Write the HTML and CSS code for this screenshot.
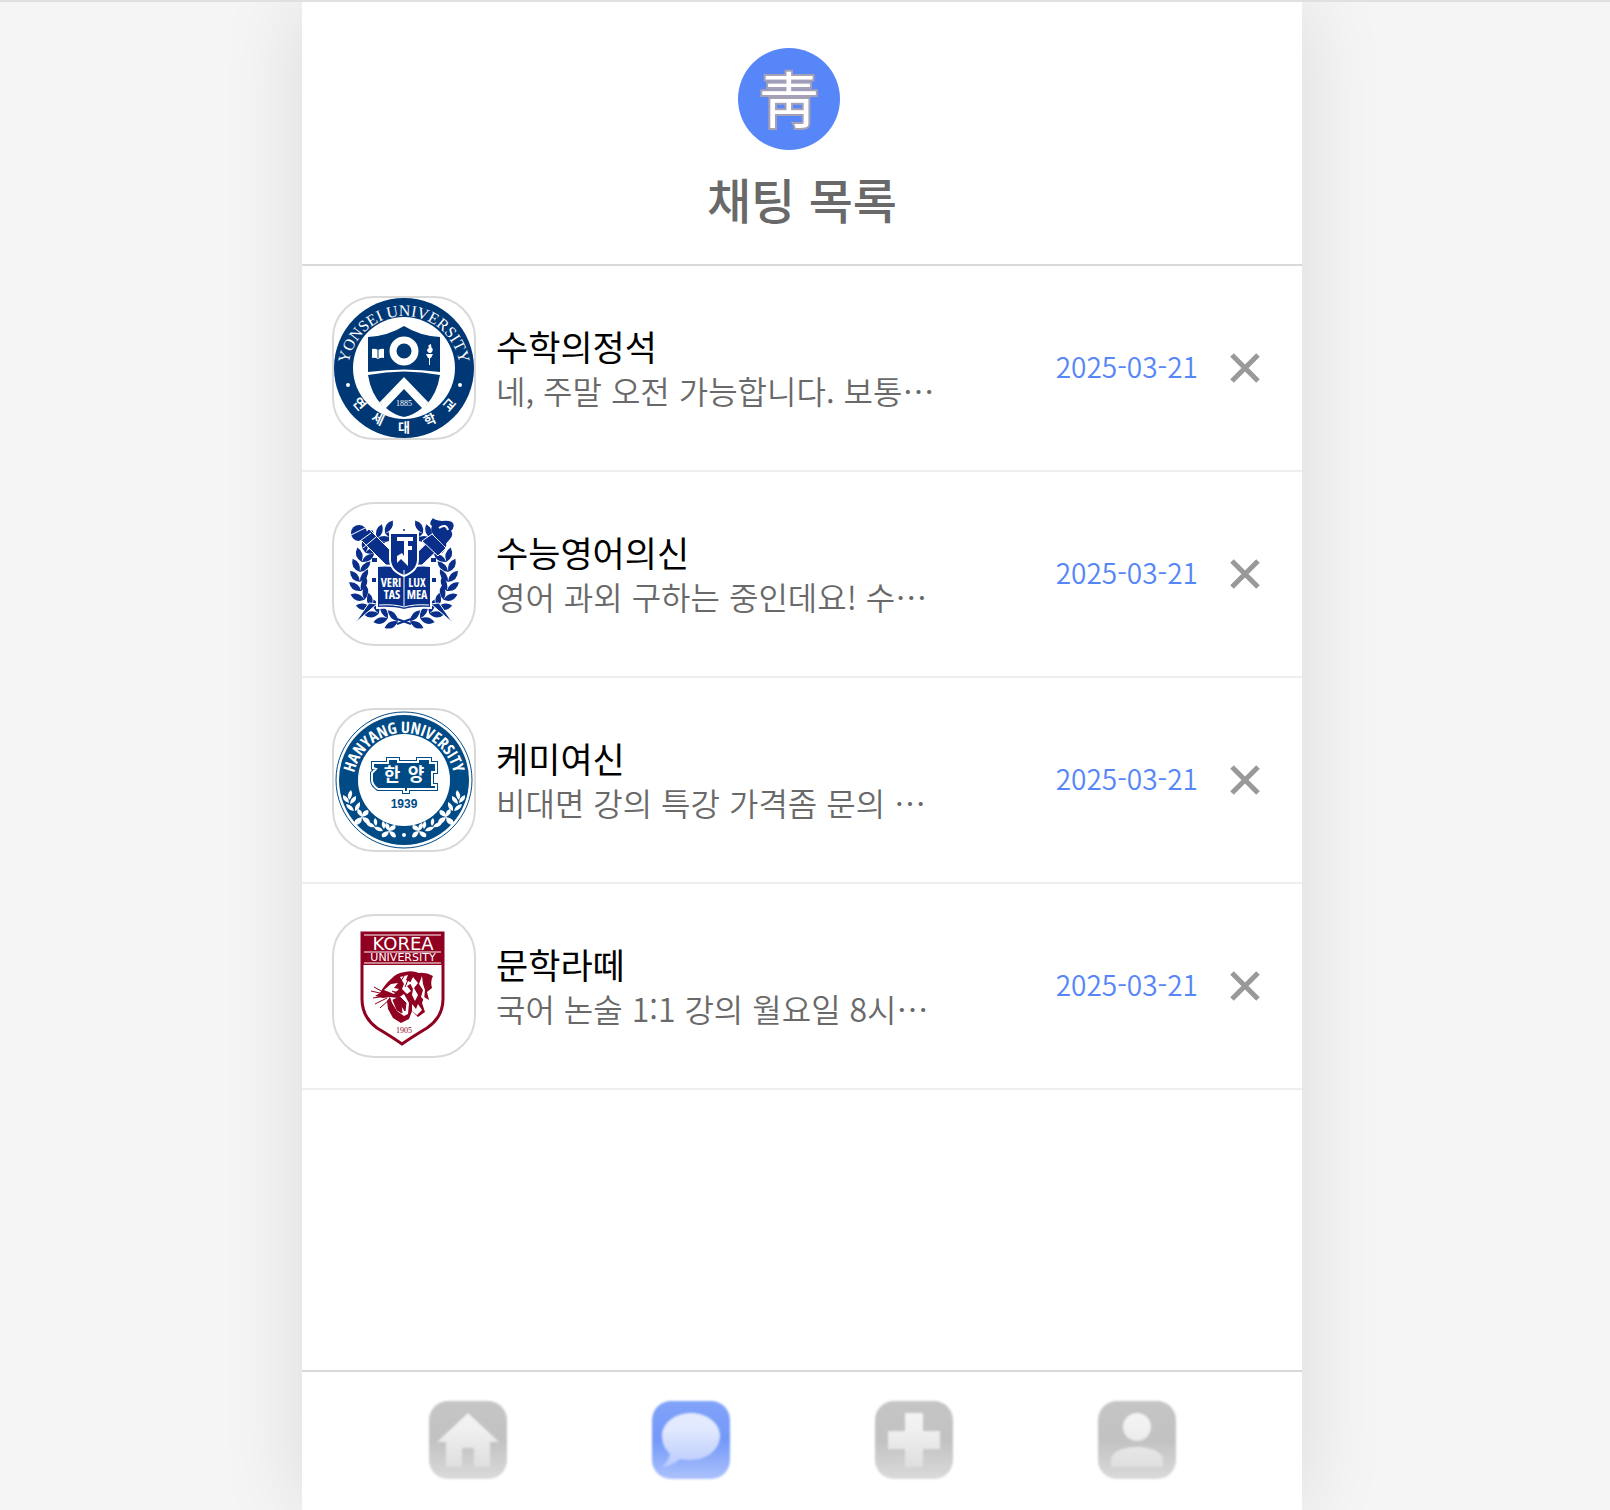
FILE: index.html
```html
<!DOCTYPE html>
<html lang="ko">
<head>
<meta charset="utf-8">
<meta name="viewport" content="width=device-width, initial-scale=1">
<title>채팅 목록</title>
<link rel="stylesheet" href="styles.css">
</head>
<body>
<div class="app">
  <header class="header">
    <a class="logo" href="#" aria-label="홈으로"><span class="logo-mark">靑</span></a>
    <h1 class="title">채팅 목록</h1>
  </header>

  <main class="main">
    <ul class="chats">
      <li class="chat">
        <svg class="thumb" viewBox="0 0 140 140" role="img" aria-label="연세대학교">
          <defs>
            <path id="yCirc" d="M14 74A56 56 0 1 1 126 74"/>
          </defs>
          <circle cx="70" cy="70" r="70" fill="#003876"/>
          <circle cx="70" cy="70" r="51" fill="#fff"/>
          <text class="seal-serif" font-size="16" fill="#fff" text-anchor="middle"><textPath href="#yCirc" startOffset="50%">YONSEI UNIVERSITY</textPath></text>
          <g class="seal-ko" font-size="13" fill="#fff" text-anchor="middle">
            <text transform="translate(22 109) rotate(49)">연</text>
            <text transform="translate(42 125) rotate(25)">세</text>
            <text x="70" y="134">대</text>
            <text transform="translate(98 126) rotate(-25)">학</text>
            <text transform="translate(119 110) rotate(-49)">교</text>
          </g>
          <circle cx="14" cy="87" r="2" fill="#fff"/><circle cx="126" cy="87" r="2" fill="#fff"/>
          <path d="M34 39q20-1 36-11 16 10 36 11v35q-36-5-72 0z" fill="#003876"/>
          <path d="M34 77q36-7 72 0-3 19-14 30L70 84l-22 23Q37 96 34 77z" fill="#003876"/>
          <path d="M48 107l22-23 22 23" fill="none" stroke="#fff" stroke-width="7"/>
          <path d="M52 110l18-19 18 19q-8 7-18 9-10-2-18-9z" fill="#003876"/>
          <circle cx="70" cy="53" r="11" fill="none" stroke="#fff" stroke-width="7"/>
          <path d="M38 51q3-1 6 1 4-2 6-1v9q-3-1-6 1-3-2-6-1z" fill="#fff"/><path d="M44 52v8" stroke="#003876"/>
          <path d="M92 56h7l-2 4h-1v7h-1v-7h-1zM95 55q-4-3 0-5-2-3 2-4 0 3 1 4 2 2-1 5z" fill="#fff"/>
          <text class="seal-serif" x="70" y="108" font-size="8" text-anchor="middle" fill="#fff">1885</text>
        </svg>
        <a class="chat-text" href="#"><strong class="name">수학의정석</strong><span class="message">네, 주말 오전 가능합니다. 보통…</span></a>
        <time class="date" datetime="2025-03-21">2025-03-21</time>
        <button class="remove" type="button" aria-label="수학의정석 채팅 삭제"><svg viewBox="0 0 30 30"><path d="M2 2l26 26M28 2L2 28"/></svg></button>
      </li>

      <li class="chat">
        <svg class="thumb" viewBox="0 0 140 140" role="img" aria-label="서울대학교">
          <defs>
            <g id="leaf"><path d="M0 1q-10-2-9-12 9 2 9 12zM0 1q0-9 9-12 1 9-9 12z"/></g>
            <g id="branch">
              <use href="#leaf" transform="translate(63 117) rotate(-80)"/>
              <use href="#leaf" transform="translate(53 114) rotate(-68)"/>
              <use href="#leaf" transform="translate(44 109) rotate(-58)"/>
              <use href="#leaf" transform="translate(36 103) rotate(-45)"/>
              <use href="#leaf" transform="translate(30 95) rotate(-32)"/>
              <use href="#leaf" transform="translate(27 86) rotate(-18)"/>
              <use href="#leaf" transform="translate(26 77) rotate(-5)"/>
              <use href="#leaf" transform="translate(26 67) rotate(8)"/>
              <use href="#leaf" transform="translate(28 57) rotate(20)"/>
              <use href="#leaf" transform="translate(32 48) rotate(34)"/>
              <use href="#leaf" transform="translate(37 40) rotate(44)"/>
              <use href="#leaf" transform="translate(44 34) rotate(55)"/>
              <use href="#leaf" transform="translate(52 29) rotate(68)"/>
            </g>
          </defs>
          <g fill="#0a2f8a">
            <use href="#branch"/><use href="#branch" transform="translate(140 0) scale(-1 1)"/>
            <path d="M63 115l14 5M77 115l-14 5" stroke="#0a2f8a" stroke-width="2"/>
            <circle cx="70" cy="26" r="1"/>
            <path d="M25 34l10-9 44 44-10 9zM97 100l8-1 14 20zM43 100l-8-1-14 20z" stroke="#fff" stroke-width="1"/>
            <circle cx="25" cy="29" r="8"/>
            <path d="M17 31l16-8M23 39l14-10M29 44l13-11" stroke="#fff" stroke-width="1"/>
            <path d="M100 32l9 9-43 41-8-9z" stroke="#fff"/>
            <path d="M88 37l10-7 14 14-8 8z" stroke="#fff"/>
            <path d="M99 30l11 12 6-7q4-5 1-8 5-5 1-9-4-2-10-1-8-1-9-3-5 6-1 8-2 4 1 8z"/>
            <path d="M105 24q7-5 9 2" fill="none" stroke="#fff" stroke-width="2"/>
            <path d="M38 54h5v4h-5zM97 54h5v4h-5zM38 74h5v4h-5zM97 74h5v4h-5z"/>
            <path d="M43 62q15-2 27 3 12-5 27-3v42q-16-1-27 2-11-3-27-2z" stroke="#fff" stroke-width="2"/>
            <path d="M56 29h28v26q0 12-14 17-14-5-14-17z" stroke="#fff" stroke-width="2"/>
          </g>
          <path d="M63 33h16v4h-5v5h4v4h-4v16l-7-7-4 4V52l5-3 2 3V37h-7z" fill="#fff"/>
          <path d="M70 66v36M45 101q15-1 25 2 10-3 25-2" fill="none" stroke="#fff"/>
          <g class="seal-cond" font-size="12" fill="#fff" text-anchor="middle">
            <text x="57" y="83">VERI</text><text x="58" y="95">TAS</text>
            <text x="83" y="83">LUX</text><text x="83" y="95">MEA</text>
          </g>
        </svg>
        <a class="chat-text" href="#"><strong class="name">수능영어의신</strong><span class="message">영어 과외 구하는 중인데요! 수…</span></a>
        <time class="date" datetime="2025-03-21">2025-03-21</time>
        <button class="remove" type="button" aria-label="수능영어의신 채팅 삭제"><svg viewBox="0 0 30 30"><path d="M2 2l26 26M28 2L2 28"/></svg></button>
      </li>

      <li class="chat">
        <svg class="thumb" viewBox="0 0 140 140" role="img" aria-label="한양대학교">
          <defs>
            <path id="hArc" d="M19 74a51 51 0 1 1 102 0"/>
            <g id="sprig" fill="#fff">
              <path d="M15 90q-3-6 2-10 3 5-2 10zM15 93q-7-2-6-8 6 2 6 8zM16 94q0-6 6-8 1 6-6 8zM20 101q-7-1-8-7 7 1 8 7zM21 101q-1-6 5-9 1 7-5 9z"/>
              <path d="M28 107q-7-4-4-8 5 1 4 8 0-7 6-7 3 5-6 7 8 0 8 6-6 2-8-6 0 8-7 8-3-6 7-8z"/>
              <path d="M41 117q-7 1-9-4 6-2 9 4zM42 116q-4-4-1-8 4 3 1 8zM49 121q-7 1-9-4 7-1 9 4zM50 119q-4-4-1-8 4 3 1 8z"/>
              <path d="M55 121q-6-4-3-8 5 1 3 8 0-6 6-6 3 5-6 6 7 0 7 6-5 2-7-6-1 7-7 6-2-5 7-6z"/>
            </g>
          </defs>
          <circle cx="70" cy="70" r="68" fill="#fff" stroke="#004a86"/>
          <circle cx="70" cy="70" r="65" fill="#004a86"/>
          <circle cx="70" cy="70" r="46" fill="#fff"/>
          <text class="seal-cond" font-size="16" fill="#fff" text-anchor="middle"><textPath href="#hArc" startOffset="50%">HANYANG UNIVERSITY</textPath></text>
          <use href="#sprig"/><use href="#sprig" transform="translate(140 0) scale(-1 1)"/>
          <circle cx="70" cy="125" r="2" fill="#fff"/>
          <path d="M39 53h15v-4h10v3h20v-3h12v4h6v9h-4v13h4v4H74v3h-4v-3H44q-6-4-6-9v-7l4-4-3-1z" fill="#004a86" stroke="#004a86" stroke-width="4"/>
          <path d="M39 53h15v-4h10v3h20v-3h12v4h6v9h-4v13h4v4H74v3h-4v-3H44q-6-4-6-9v-7l4-4-3-1z" fill="#004a86" stroke="#fff" stroke-width="2"/>
          <g class="seal-ko" font-size="18" fill="#fff" text-anchor="middle"><text x="58" y="71">한</text><text x="82" y="71">양</text></g>
          <text class="seal-wide" x="70" y="98" font-size="12" fill="#004a86" text-anchor="middle">1939</text>
        </svg>
        <a class="chat-text" href="#"><strong class="name">케미여신</strong><span class="message">비대면 강의 특강 가격좀 문의 …</span></a>
        <time class="date" datetime="2025-03-21">2025-03-21</time>
        <button class="remove" type="button" aria-label="케미여신 채팅 삭제"><svg viewBox="0 0 30 30"><path d="M2 2l26 26M28 2L2 28"/></svg></button>
      </li>

      <li class="chat">
        <svg class="thumb" viewBox="0 0 140 140" role="img" aria-label="고려대학교">
          <path d="M28 17h81v66q0 18-16 29-15 9-25 16-10-7-25-16-15-11-15-29z" fill="#fff" stroke="#900020" stroke-width="3"/>
          <path d="M27 16h83v33H27z" fill="#900020"/>
          <path d="M30 19h77M30 36h77M30 47h77" stroke="#fff"/>
          <g class="seal-sans" fill="#fff" text-anchor="middle">
            <text x="69" y="34" font-size="18">KOREA</text>
            <text x="69" y="45" font-size="11">UNIVERSITY</text>
          </g>
          <path d="M46 77q5-9 11-14 5-6 14-7 7-2 14 1 7-1 14 3-3 5-1 12l-5 4 2 8-5-3-2 6 3 9-7 5-6-6-3 8-8 4-8-5-5-9-1-8 3-4-7 1-8-2z" fill="#900020"/>
          <path d="M50 74l7-6 7-1-4 5 5 1-5 5zM56 81l8 1 6-4 5 9-1 11-4 2-7-5-5-8zM66 61l8-2-2 5 6 3-5 3 4 5-4 3-5-5 2-5zM79 61l5 6-4 5 4 7-3 6-3-6 1-6-3-6zM88 60l-3 8 4 6-2 7 3 3 1-10-2-6zM78 88l4 5 2-5 4 6-5 5-5-4z" fill="#fff"/>
          <path d="M59 84l4 10 5 3-1-8 4 6 1-8-6-6zM66 76q-5 2-8-1M70 60l-5 8M74 64l-3 7M75 79l4 5" fill="#900020" stroke="#900020"/>
          <path d="M37 75l13 3M39 82l13-2M41 88l12-6M46 92l10-9M40 71l9 5" fill="none" stroke="#900020"/>
          <text class="seal-serif" x="70" y="117" font-size="8" fill="#900020" text-anchor="middle">1905</text>
        </svg>
        <a class="chat-text" href="#"><strong class="name">문학라떼</strong><span class="message">국어 논술 1:1 강의 월요일 8시…</span></a>
        <time class="date" datetime="2025-03-21">2025-03-21</time>
        <button class="remove" type="button" aria-label="문학라떼 채팅 삭제"><svg viewBox="0 0 30 30"><path d="M2 2l26 26M28 2L2 28"/></svg></button>
      </li>
    </ul>
  </main>

  <nav class="tabs" aria-label="주 메뉴">
    <a class="tab" href="#" aria-label="홈">
      <svg viewBox="0 0 80 80">
        <defs>
          <linearGradient id="grayTile" x2="0" y2="1"><stop offset="0" stop-color="#c5c5c5"/><stop offset=".5" stop-color="#c2c2c2"/><stop offset="1" stop-color="#dadada"/></linearGradient>
          <linearGradient id="blueTile" x2="0" y2="1"><stop offset="0" stop-color="#82a3fa"/><stop offset=".5" stop-color="#7398f8"/><stop offset="1" stop-color="#adc2fd"/></linearGradient>
          <linearGradient id="grayGlyph" gradientUnits="userSpaceOnUse" x1="0" y1="13" x2="0" y2="67"><stop offset="0" stop-color="#f4f4f4"/><stop offset=".3" stop-color="#f0f0f0"/><stop offset="1" stop-color="#dedede"/></linearGradient>
          <linearGradient id="blueGlyph" gradientUnits="userSpaceOnUse" x1="0" y1="13" x2="0" y2="67"><stop offset="0" stop-color="#e4ebfe"/><stop offset=".3" stop-color="#e1e9fe"/><stop offset="1" stop-color="#b9cafd"/></linearGradient>
        </defs>
        <rect x="1" y="1" width="78" height="78" rx="19" fill="url(#grayTile)"/>
        <path d="M40 13l31 29h-9v25H46V48H34v19H18V42H9z" fill="url(#grayGlyph)"/>
      </svg>
    </a>
    <a class="tab" href="#" aria-label="채팅" aria-current="page">
      <svg viewBox="0 0 80 80">
        <rect x="1" y="1" width="78" height="78" rx="19" fill="url(#blueTile)"/>
        <path d="M40 13c16 0 29 10 29 23S56 60 40 60q-6 0-11-1-8 7-18 8 6-5 8-13-8-7-8-18c0-13 13-23 29-23z" fill="url(#blueGlyph)"/>
      </svg>
    </a>
    <a class="tab" href="#" aria-label="추가">
      <svg viewBox="0 0 80 80">
        <rect x="1" y="1" width="78" height="78" rx="19" fill="url(#grayTile)"/>
        <path d="M31 13h18v18h17v18H49v18H31V49H14V31h17z" fill="url(#grayGlyph)"/>
      </svg>
    </a>
    <a class="tab" href="#" aria-label="내 정보">
      <svg viewBox="0 0 80 80">
        <rect x="1" y="1" width="78" height="78" rx="19" fill="url(#grayTile)"/>
        <circle cx="40" cy="27" r="14" fill="url(#grayGlyph)"/>
        <path d="M14 67v-7c0-8 12-13 26-13s26 5 26 13v7z" fill="url(#grayGlyph)"/>
      </svg>
    </a>
  </nav>
</div>
</body>
</html>
```
FILE: styles.css
```css
* { box-sizing: border-box; }

body {
  margin: 0;
  padding-right: 6px;
  border-top: 2px solid #e0e0e0;
  background: #f5f5f5;
  color: #000;
  font-family: "Noto Sans CJK KR", sans-serif;
}

a { color: inherit; text-decoration: none; }

.app {
  display: flex;
  flex-direction: column;
  max-width: 1000px;
  min-height: calc(100vh - 2px);
  margin: 0 auto;
  background: #fff;
  box-shadow: 0 0 80px rgb(0 0 0 / 11%);
}

.header {
  display: flex;
  flex-direction: column;
  align-items: center;
  gap: 12px;
  padding: 46px 30px 30px;
  border-bottom: 2px solid #d9d9d9;
}

.logo { padding-right: 26px; }

.logo-mark {
  display: block;
  width: 102px;
  height: 102px;
  border-radius: 50%;
  background: #5686f8;
  color: #fff;
  font-size: 60px;
  font-weight: 400;
  line-height: 98px;
  text-align: center;
  -webkit-text-stroke: 4px #a5a0b4;
  paint-order: stroke fill;
}

.title {
  margin: 0;
  color: #696969;
  font-size: 48px;
  font-weight: 500;
  line-height: 72px;
}

.main { flex: 1; }

.chats { margin: 0; padding: 0; list-style: none; }

.chat {
  display: flex;
  align-items: center;
  padding: 30px 42px 30px 30px;
  border-bottom: 2px solid #eee;
}

.thumb {
  flex: none;
  width: 144px;
  height: 144px;
  border: 2px solid #d9d9d9;
  border-radius: 42px;
  background: #fff;
}

.chat-text {
  display: flex;
  flex: 1;
  flex-direction: column;
  min-width: 0;
  padding-left: 20px;
}

.name {
  font-size: 35px;
  font-weight: 400;
  line-height: 44px;
}

.message {
  overflow: hidden;
  color: #696969;
  font-size: 32px;
  font-weight: 350;
  line-height: 44px;
  text-overflow: ellipsis;
  white-space: nowrap;
}

.date {
  padding-bottom: 4px;
  color: #5686f8;
  font-size: 28px;
  font-weight: 350;
  line-height: 40px;
}

.remove {
  display: grid;
  margin-left: 32px;
  padding: 0;
  border: 0;
  background: none;
  cursor: pointer;
}

.remove svg {
  width: 30px;
  height: 30px;
  fill: none;
  stroke: #999;
  stroke-width: 5;
}

.tabs {
  display: grid;
  grid-template-columns: repeat(4, 1fr);
  justify-items: center;
  padding: 28px 54px 30px;
  border-top: 2px solid #d9d9d9;
}

.tab svg {
  display: block;
  width: 80px;
  height: 80px;
  filter: blur(1px);
}

.seal-serif { font-family: "Liberation Serif", serif; }
.seal-ko { font-family: "Noto Sans CJK KR", sans-serif; font-weight: 700; }
.seal-cond { font-family: "Open Sans", sans-serif; font-weight: 700; font-stretch: condensed; }
.seal-wide { font-family: "Liberation Sans", sans-serif; font-weight: 700; }
.seal-sans { font-family: "DejaVu Sans", sans-serif; }
```
